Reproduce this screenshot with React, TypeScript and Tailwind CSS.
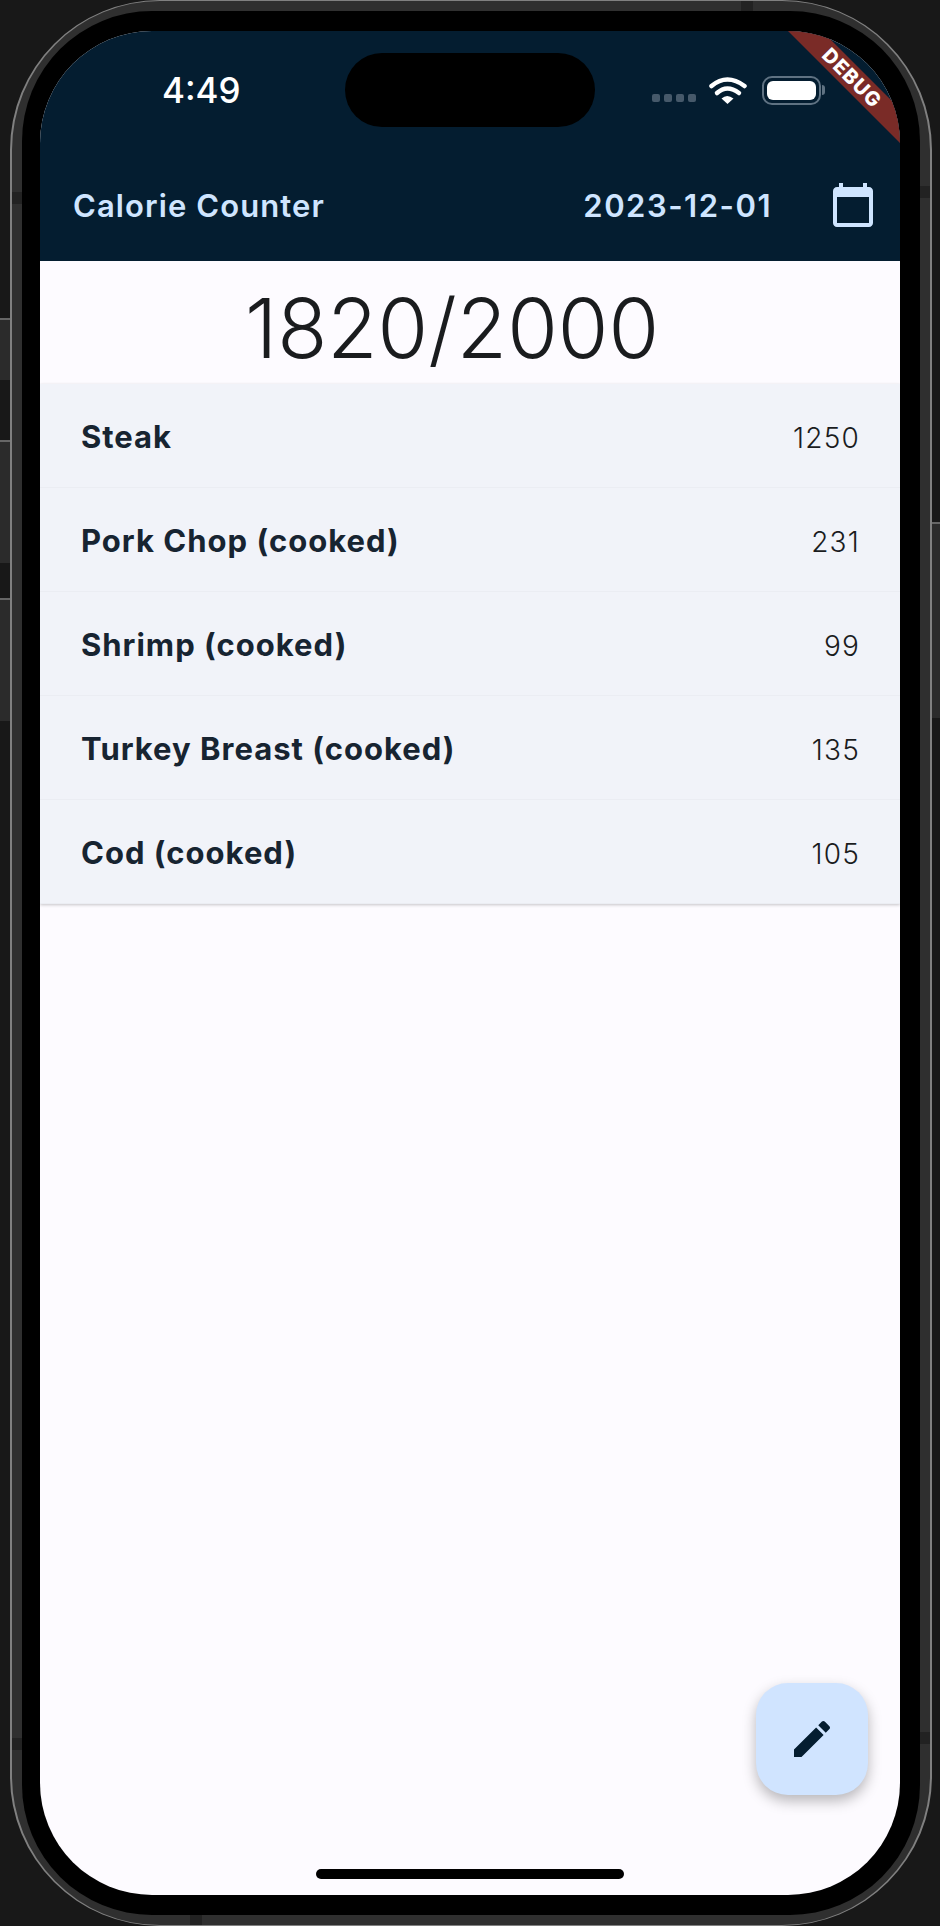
const foods = [
  { name: "Steak", calories: 1250 },
  { name: "Pork Chop (cooked)", calories: 231 },
  { name: "Shrimp (cooked)", calories: 99 },
  { name: "Turkey Breast (cooked)", calories: 135 },
  { name: "Cod (cooked)", calories: 105 },
];

function StatusBar() {
  return (
    <div className="h-[118px] flex items-center pl-[122px] pr-[75px]">
      <span className="text-[35px] leading-none font-medium text-white">4:49</span>
      <div className="ml-auto flex items-center">
        <div className="flex gap-1 mt-4 mr-[13px]">
          <div className="w-2 h-2 rounded-[2px] bg-[#46596a]" />
          <div className="w-2 h-2 rounded-[2px] bg-[#46596a]" />
          <div className="w-2 h-2 rounded-[2px] bg-[#46596a]" />
          <div className="w-2 h-2 rounded-[2px] bg-[#46596a]" />
        </div>
        <svg width="38" height="29" viewBox="0 0 38 29" className="mr-[15px]">
          <path d="M2.500 10Q18-3 35.500 10" fill="none" stroke="#fff" strokeWidth="4.500" strokeLinecap="round" />
          <path d="M8 17Q18 8 30 17" fill="none" stroke="#fff" strokeWidth="4.500" strokeLinecap="round" />
          <path d="M12.500 22.500Q18 17.500 24.500 22.500L18.500 28Z" fill="#fff" />
        </svg>
        <div className="w-[59px] h-[29px] rounded-[10px] border-2 border-[#5f7282] p-[3px]">
          <div className="w-full h-full rounded-[6px] bg-white" />
        </div>
        <div className="w-[3px] h-[10px] ml-px rounded-r-sm bg-[#5f7282]" />
      </div>
    </div>
  );
}

function AppBar() {
  return (
    <div className="h-[112px] flex items-center pl-[33px] pr-[23px] text-[#cfe5ff]">
      <h1 className="text-[31px] leading-none font-semibold tracking-[1.100px]">Calorie Counter</h1>
      <span className="ml-auto mr-[57px] text-[31px] leading-none font-semibold tracking-[1.500px]">2023-12-01</span>
      <svg width="48" height="48" viewBox="0 0 24 24" fill="currentColor">
        <path d="M20 3h-1V1h-2v2H7V1H5v2H4c-1.100 0-2 .9-2 2v16c0 1.100.9 2 2 2h16c1.100 0 2-.9 2-2V5c0-1.100-.9-2-2-2zm0 18H4V8h16v13z" />
      </svg>
    </div>
  );
}

export default function App() {
  return (
    <div className="w-[940px] h-[1926px] flex bg-[#181818] font-['Inter',sans-serif]">
      <div className="w-[10px] flex flex-col">
        <div className="h-[318px]" />
        <div className="h-[62px] border-t-2 border-[#666] bg-[#2b2b2b]" />
        <div className="h-[60px]" />
        <div className="h-[123px] border-t-2 border-[#666] bg-[#2b2b2b]" />
        <div className="h-[35px]" />
        <div className="h-[123px] border-t-2 border-[#666] bg-[#2b2b2b]" />
      </div>

      <div className="relative w-[922px] h-[1926px] rounded-[150px] border-x-2 border-y border-[#808080] bg-[#2f2f2f] p-[10px]">
        {/* antenna bands */}
        <div className="absolute top-0 left-[729px] w-3 h-[10px] bg-[#222]" />
        <div className="absolute bottom-0 left-[178px] w-3 h-[10px] bg-[#222]" />
        <div className="absolute top-[191px] left-0 w-[10px] h-3 bg-[#222]" />
        <div className="absolute top-[1737px] left-0 w-[10px] h-3 bg-[#222]" />
        <div className="absolute top-[185px] right-0 w-[10px] h-3 bg-[#222]" />
        <div className="absolute top-[1731px] right-0 w-[10px] h-3 bg-[#222]" />

        <div className="relative h-full rounded-[130px] bg-black pl-[18px] pr-5 py-5">
          <div className="relative h-full flex flex-col overflow-hidden rounded-[112px] bg-[#fdfbff]">
            <header className="bg-[#041d30]">
              <StatusBar />
              <AppBar />
            </header>

            <div className="h-[123px] shrink-0 flex items-center justify-center pt-[13px] pr-9">
              <span className="text-[82px] leading-none font-[350] text-[#1a1c1e]">1820/2000</span>
            </div>

            <ul className="shadow-[0_1px_3px_rgba(0,0,0,0.22)]">
              {foods.map((food) => (
                <li
                  key={food.name}
                  className="h-[104px] flex items-center justify-between pt-1 pl-[41px] pr-10 bg-[#f1f3f9] border-b border-[#ebedf3]"
                >
                  <span className="text-[31px] tracking-[1px] font-bold text-[#172431]">{food.name}</span>
                  <span className="text-[28px] tracking-[1.200px] font-light text-[#1a1c1e]">{food.calories}</span>
                </li>
              ))}
            </ul>

            {/* dynamic island */}
            <div className="absolute top-[22px] left-[305px] w-[250px] h-[74px] rounded-[37px] bg-black" />

            {/* debug banner */}
            <div className="absolute top-[35px] left-[692px] w-[240px] h-6 rotate-45 flex items-center justify-center bg-[#7a2b27]">
              <span className="text-[20px] leading-none tracking-[1px] font-extrabold text-white">DEBUG</span>
            </div>

            <button className="absolute right-8 bottom-[100px] w-28 h-28 flex items-center justify-center rounded-[32px] bg-[#d0e4ff] text-[#041d30] shadow-[0_6px_14px_rgba(0,0,0,0.28)]">
              <svg width="48" height="48" viewBox="0 0 24 24" fill="currentColor">
                <path d="M3 17.250V21h3.750L17.810 9.940l-3.750-3.750L3 17.250zM20.710 7.040c.39-.39.39-1.020 0-1.410l-2.340-2.340c-.39-.39-1.020-.39-1.410 0l-1.830 1.830 3.750 3.750 1.830-1.830z" />
              </svg>
            </button>

            {/* home indicator */}
            <div className="absolute bottom-4 left-[276px] w-[308px] h-[10px] rounded-full bg-black" />
          </div>
        </div>
      </div>

      <div className="w-2 flex flex-col">
        <div className="h-[522px]" />
        <div className="h-[196px] border-t-2 border-[#666] bg-[#2b2b2b]" />
      </div>
    </div>
  );
}
